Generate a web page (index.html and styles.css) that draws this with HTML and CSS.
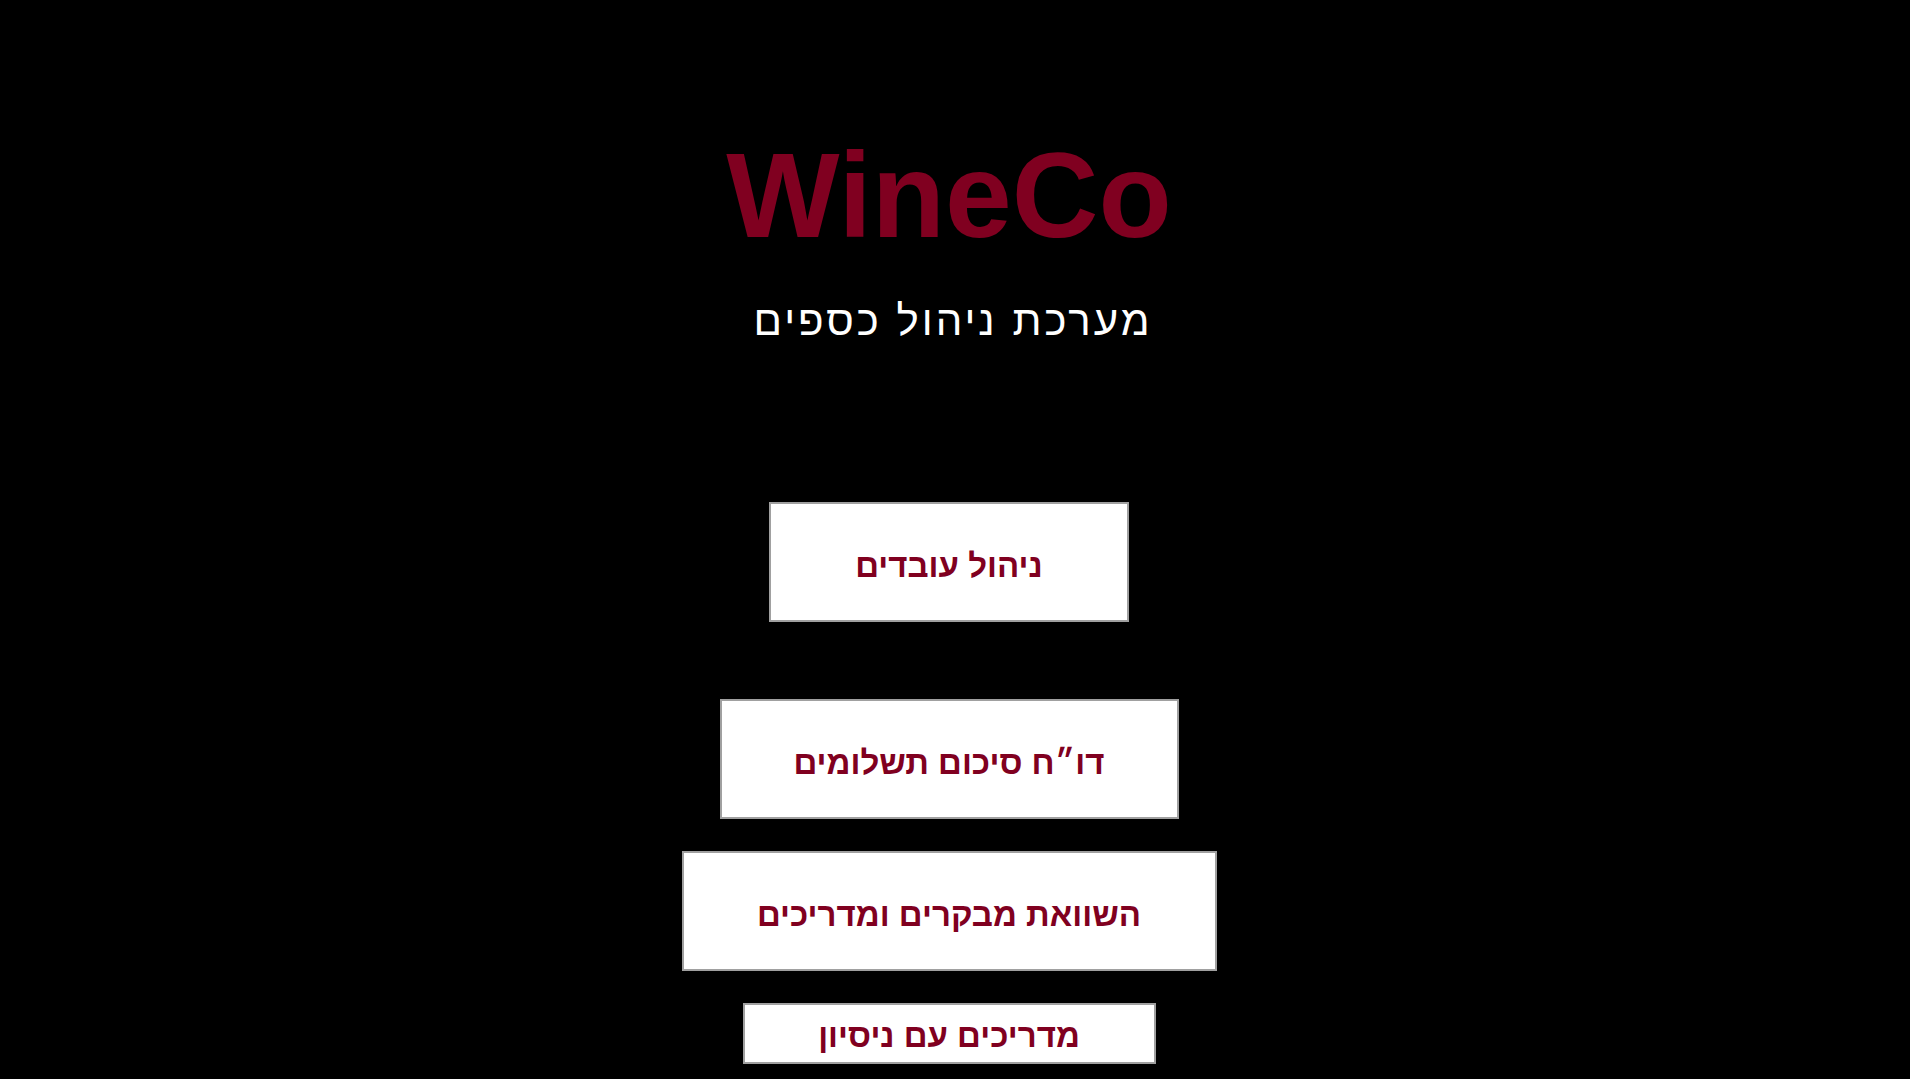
FILE: index.html
```html
<!DOCTYPE html>
<html lang="he" dir="rtl">
<head>
<meta charset="utf-8">
<title>WineCo</title>
<link rel="stylesheet" href="styles.css">
</head>
<body>
<main class="page">
  <header class="brand">
    <h1 class="brand-title" dir="ltr">WineCo</h1>
    <p class="brand-subtitle">מערכת ניהול כספים</p>
  </header>
  <nav class="menu">
    <button class="menu-btn btn-employees">ניהול עובדים</button>
    <button class="menu-btn btn-report">דו״ח סיכום תשלומים</button>
    <button class="menu-btn btn-compare">השוואת מבקרים ומדריכים</button>
    <button class="menu-btn btn-guides">מדריכים עם ניסיון</button>
  </nav>
</main>
</body>
</html>
```

FILE: styles.css
```css
html, body {
  margin: 0;
  padding: 0;
  background: #000;
}

body {
  font-family: "Liberation Sans", Arial, sans-serif;
  overflow: hidden;
  height: 1079px;
}

.page {
  display: flex;
  flex-direction: column;
  align-items: center;
  padding-right: 12px;
}

.brand {
  display: flex;
  flex-direction: column;
  align-items: center;
}

.brand-title {
  margin: 135px 0 0;
  font-size: 120px;
  line-height: 120px;
  font-weight: 700;
  color: #800020;
}

.brand-subtitle {
  margin: 43px 0 0;
  padding-left: 8px;
  font-family: "Liberation Sans", Arial, sans-serif;
  font-size: 42px;
  line-height: 46px;
  letter-spacing: 3px;
  color: #fff;
}

.menu {
  margin-top: 158px;
  display: flex;
  flex-direction: column;
  align-items: center;
  gap: 32px;
}

.menu-btn {
  box-sizing: border-box;
  height: 120px;
  padding: 7px 0 0;
  background: #fff;
  border: 2px solid #a0a0a0;
  font-family: "Liberation Sans", Arial, sans-serif;
  font-size: 33px;
  font-weight: 700;
  color: #800020;
  cursor: pointer;
}

.btn-employees {
  width: 360px;
  margin-bottom: 45px;
}

.btn-report {
  width: 459px;
}

.btn-compare {
  width: 535px;
}

.btn-guides {
  width: 413px;
  height: 61px;
  padding-top: 5px;
}
```
